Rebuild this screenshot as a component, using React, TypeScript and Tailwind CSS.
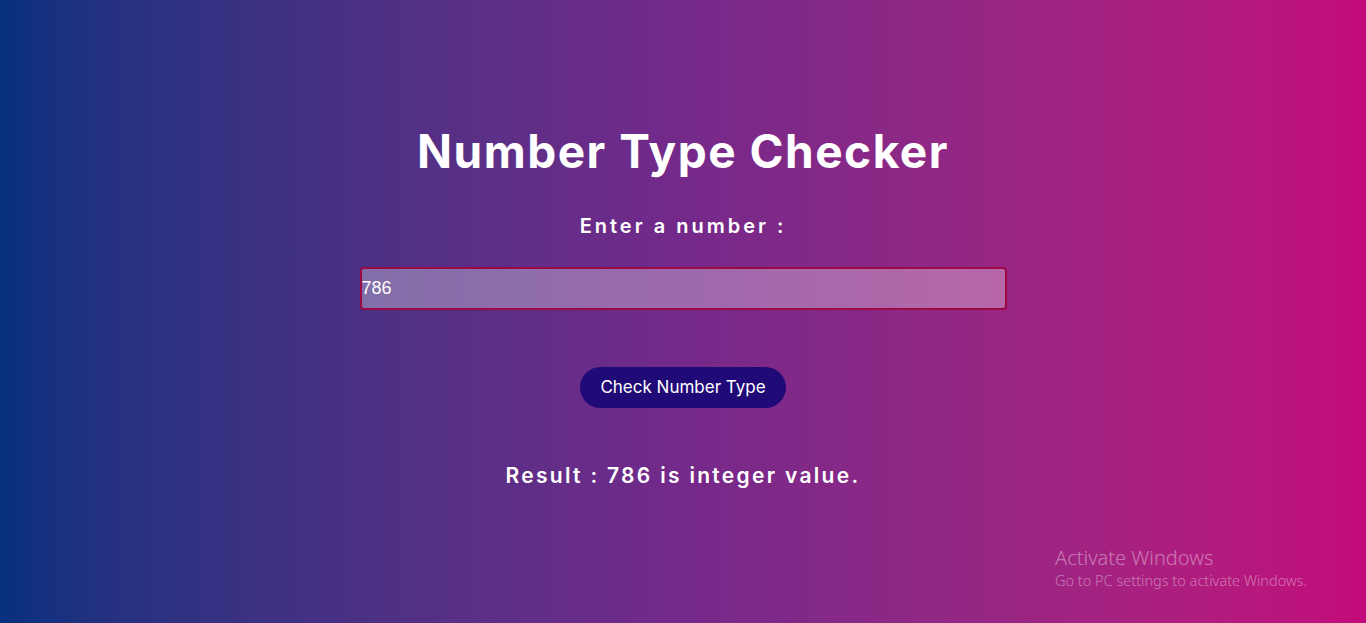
import React, { useState } from 'react';

const App: React.FC = () => {
  const [value, setValue] = useState('786');
  const [result, setResult] = useState('786 is integer value.');

  const check = () => {
    const n = Number(value);
    if (value.trim() === '' || isNaN(n)) {
      setResult('Please enter a valid number.');
    } else if (Number.isInteger(n)) {
      setResult(`${value} is integer value.`);
    } else {
      setResult(`${value} is float value.`);
    }
  };

  return (
    <div
      className="relative h-[623px] w-full overflow-hidden bg-gradient-to-r from-[#05307e] via-[#74298a] to-[#c3097a] text-white"
      style={{ fontFamily: 'Inter, "Open Sans", sans-serif' }}
    >
      <div className="flex flex-col items-center pt-[123px]">
        <h1 className="text-[46px] font-bold leading-[56px] tracking-[1.5px]">Number Type Checker</h1>

        <label className="mt-[33px] text-[20px] font-semibold leading-[28px] tracking-[3px]">
          Enter a number :
        </label>

        <input
          type="text"
          value={value}
          onChange={(e) => setValue(e.target.value)}
          className="mt-[27px] h-[43px] w-[647px] rounded-[4px] border-2 border-[#9c0a45] bg-white/30 px-0 text-[18px] text-white outline-none"
          style={{ fontFamily: '"Liberation Sans", Arial, sans-serif' }}
        />

        <button
          onClick={check}
          className="mt-[57px] h-[41px] rounded-full bg-[#1f0a78] px-[20px] text-[17px] leading-[41px] text-white"
        >
          Check Number Type
        </button>

        <p className="mt-[53px] text-[21px] font-semibold leading-[30px] tracking-[2.3px]">
          Result : {result}
        </p>
      </div>

      <div
        className="absolute left-[1055px] top-[546px] text-white/40"
        style={{ fontFamily: '"Noto Sans", "Open Sans", sans-serif' }}
      >
        <div className="text-[20px] font-light leading-[24px]">Activate Windows</div>
        <div className="text-[14.5px] font-light leading-[20px]">Go to PC settings to activate Windows.</div>
      </div>
    </div>
  );
};

export default App;
